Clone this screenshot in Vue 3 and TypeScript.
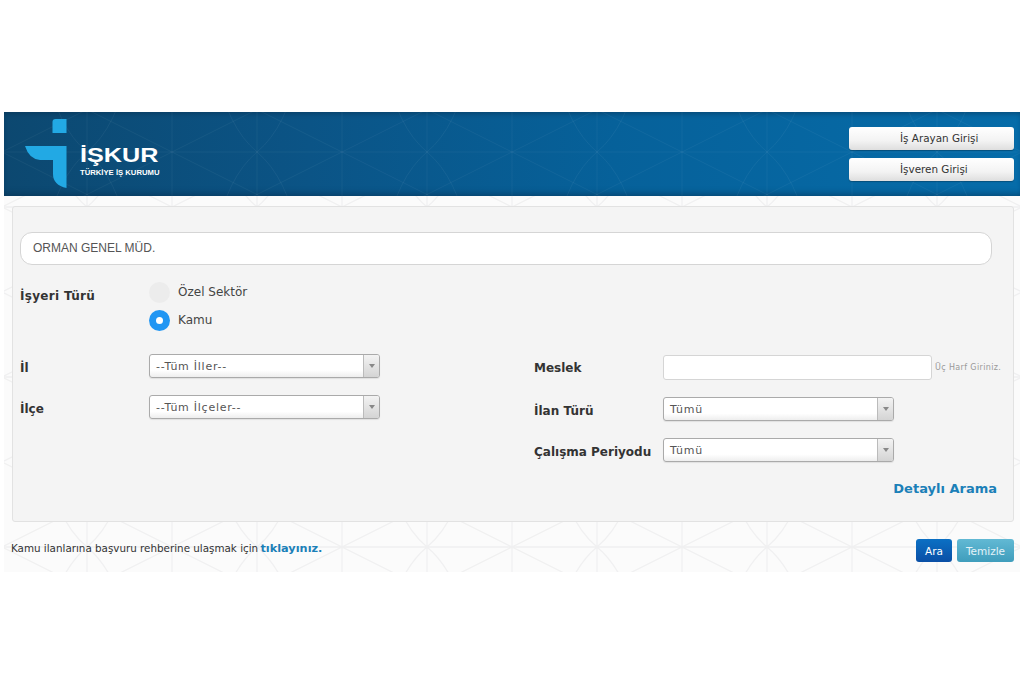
<script setup lang="ts">
function buildPattern(originX: number, originY: number, w: number, h: number): string {
  const parts: string[] = [];
  const step = 85;
  const rowStep = 170;
  for (let j = -3; j < 5; j++) {
    const y = originY + j * rowStep;
    parts.push(`M0 ${y} L${w} ${y}`);
  }
  for (let i = -8; i < 16; i++) {
    const x = originX + i * step;
    parts.push(`M${x} 0 L${x} ${h}`);
    for (let j = -3; j < 5; j++) {
      const y = originY + j * rowStep;
      if (((i % 2) + 2) % 2 === 0) {
        parts.push(`M${x - 170} ${y - 85} L${x + 170} ${y + 85} M${x - 170} ${y + 85} L${x + 170} ${y - 85}`);
      } else {
        parts.push(`M${x - 42} ${y - 85} Q${x - 30} ${y - 25} ${x} ${y} Q${x + 30} ${y + 25} ${x + 42} ${y + 85}`);
        parts.push(`M${x + 42} ${y - 85} Q${x + 30} ${y - 25} ${x} ${y} Q${x - 30} ${y + 25} ${x - 42} ${y + 85}`);
      }
    }
  }
  return parts.join(" ");
}
const headerPattern = buildPattern(508, 40, 1016, 84);
const bgPattern = buildPattern(508, 351, 1016, 376);
</script>

<template>
  <div class="page">
    <header class="top">
      <svg class="top-pattern" width="1016" height="84" viewBox="0 0 1016 84" aria-hidden="true">
        <path :d="headerPattern" fill="none" stroke="#ffffff" stroke-opacity="0.05" stroke-width="1" />
      </svg>
      <div class="brand">
        <svg class="mark" width="46" height="72" viewBox="0 0 46 72" aria-hidden="true">
          <path d="M27.5 3 Q27.5 0 30.5 0 L41.5 0 L41.5 14 L27.5 14 Z" fill="#22a9e4" />
          <path d="M0 27 L41.5 27 L41.5 69 Q28 66 28 55 L28 41 L15 41 Q4 40 0 27 Z" fill="#22a9e4" />
        </svg>
        <div class="brand-text">
          <div class="brand-name">İŞKUR</div>
          <div class="brand-sub">TÜRKİYE İŞ KURUMU</div>
        </div>
      </div>
      <div class="logins">
        <button class="login" type="button">İş Arayan Girişi</button>
        <button class="login" type="button">İşveren Girişi</button>
      </div>
    </header>

    <main class="body">
      <svg class="body-pattern" width="1016" height="376" viewBox="0 0 1016 376" aria-hidden="true">
        <path :d="bgPattern" fill="none" stroke="#f0f0f1" stroke-width="1.3" />
      </svg>
      <section class="panel">
        <div class="search">ORMAN GENEL MÜD.</div>

        <div class="type-row">
          <div class="label type-label">İşyeri Türü</div>
          <div class="radios">
            <div class="radio-row">
              <span class="radio"></span>
              <span class="radio-text">Özel Sektör</span>
            </div>
            <div class="radio-row">
              <span class="radio on"></span>
              <span class="radio-text">Kamu</span>
            </div>
          </div>
        </div>

        <div class="cols">
          <div class="col-left">
            <div class="field">
              <div class="label left-label">İl</div>
              <div class="select"><span class="select-text">--Tüm İller--</span><span class="select-btn"></span></div>
            </div>
            <div class="field">
              <div class="label left-label">İlçe</div>
              <div class="select"><span class="select-text">--Tüm İlçeler--</span><span class="select-btn"></span></div>
            </div>
          </div>
          <div class="col-right">
            <div class="field meslek">
              <div class="label right-label meslek-label">Meslek</div>
              <div class="text-input"></div>
              <span class="hint">Üç Harf Giriniz.</span>
            </div>
            <div class="field">
              <div class="label right-label">İlan Türü</div>
              <div class="select"><span class="select-text">Tümü</span><span class="select-btn"></span></div>
            </div>
            <div class="field">
              <div class="label right-label">Çalışma Periyodu</div>
              <div class="select"><span class="select-text">Tümü</span><span class="select-btn"></span></div>
            </div>
            <a class="detail" href="#">Detaylı Arama</a>
          </div>
        </div>
      </section>

      <footer class="foot">
        <p class="note">Kamu ilanlarına başvuru rehberine ulaşmak için <a href="#">tıklayınız.</a></p>
        <div class="actions">
          <button class="act ara" type="button">Ara</button>
          <button class="act temizle" type="button">Temizle</button>
        </div>
      </footer>
    </main>
  </div>
</template>

<style>
html, body { margin: 0; background: #fff; }
</style>

<style scoped>
* { box-sizing: border-box; }
.page {
  width: 1024px;
  height: 683px;
  padding: 112px 4px 0;
  font-family: "DejaVu Sans", Verdana, sans-serif;
  color: #333;
  overflow: hidden;
}
.top {
  position: relative;
  height: 84px;
  display: flex;
  justify-content: space-between;
  background: linear-gradient(90deg, #0c4870 0%, #0b5486 30%, #06619a 60%, #066ca9 100%);
  box-shadow: inset 0 5px 5px -3px rgba(6, 40, 70, .45), inset 0 -6px 6px -4px rgba(6, 40, 70, .5);
  padding: 7px 6px 0 21px;
}
.top-pattern { position: absolute; left: 0; top: 0; }
.brand { position: relative; display: flex; }
.mark { display: block; }
.brand-text { margin: 25px 0 0 9px; color: #fff; font-family: "Liberation Sans", Arial, sans-serif; font-weight: 700; }
.brand-name {
  font-size: 20px;
  line-height: 22px;
  transform: scaleX(1.26);
  transform-origin: left center;
}
.brand-sub { font-size: 7.7px; line-height: 10px; margin-top: 2px; white-space: nowrap; }
.logins { position: relative; display: flex; flex-direction: column; gap: 8px; padding-top: 8px; }
.login {
  width: 165px;
  height: 23px;
  border: 0;
  border-radius: 3px;
  padding: 0 0 2px 51px;
  text-align: left;
  background: linear-gradient(#ffffff, #f3f3f3 60%, #dedede);
  font: 10.4px "DejaVu Sans", Verdana, sans-serif;
  color: #333;
  box-shadow: 0 1px 1px rgba(0, 0, 0, .25);
}
.body {
  position: relative;
  height: 376px;
  background: #fbfbfb;
  padding: 10px 6px 0 8px;
  overflow: hidden;
}
.body-pattern { position: absolute; left: 0; top: 0; }
.panel {
  position: relative;
  height: 316px;
  background: #f4f4f4;
  border: 1px solid #e2e2e2;
  border-radius: 3px;
  padding: 25px 0 0 7px;
}
.search {
  width: 972px;
  height: 33px;
  border: 1px solid #d5d5d5;
  border-radius: 12px;
  background: #fff;
  padding-left: 12px;
  font: 12px/31px "Liberation Sans", Arial, sans-serif;
  color: #555;
}
.label { flex: none; font-size: 12px; font-weight: 700; color: #333; white-space: nowrap; padding-top: 3px; }
.meslek-label { padding-top: 0; }
.type-row { display: flex; margin-top: 17px; }
.type-label { width: 129px; padding-top: 6px; line-height: 16px; letter-spacing: .3px; }
.radios { display: flex; flex-direction: column; gap: 7px; }
.radio-row { display: flex; height: 21px; gap: 8px; }
.radio { width: 21px; height: 21px; border-radius: 50%; background: #ececec; position: relative; }
.radio.on { background: #2196f3; }
.radio.on::after {
  content: "";
  position: absolute;
  left: 7px;
  top: 7px;
  width: 7px;
  height: 7px;
  border-radius: 50%;
  background: #fff;
}
.radio-text { font-size: 12px; line-height: 14px; color: #444; padding-top: 2.5px; }
.cols { display: flex; margin-top: 24px; }
.col-left { width: 514px; margin-top: -1px; display: flex; flex-direction: column; gap: 17px; }
.col-right { width: 463px; display: flex; flex-direction: column; gap: 17px; position: relative; }
.field { display: flex; align-items: center; height: 24px; }
.left-label { width: 129px; }
.right-label { width: 129px; }
.meslek { height: 25px; }
.select {
  width: 231px;
  height: 24px;
  display: flex;
  border: 1px solid #aaa;
  border-radius: 3px;
  background: linear-gradient(#ffffff 70%, #eeeeee);
  box-shadow: 0 1px 1px rgba(0, 0, 0, .08);
  overflow: hidden;
}
.select-text { flex: 1; padding-left: 6px; font-size: 11px; line-height: 24px; color: #555; letter-spacing: .75px; white-space: nowrap; }
.select-btn {
  position: relative;
  width: 16px;
  border-left: 1px solid #bbb;
  background: linear-gradient(#f3f3f3, #d4d4d4);
}
.select-btn::after {
  content: "";
  position: absolute;
  left: 5px;
  top: 9px;
  border: 3px solid transparent;
  border-top: 4px solid #888;
  border-bottom: 0;
}
.text-input {
  width: 269px;
  height: 25px;
  border: 1px solid #d5d5d5;
  border-radius: 3px;
  background: #fff;
  flex: none;
}
.hint { margin-left: 3px; font-size: 8px; color: #999; white-space: nowrap; letter-spacing: .37px; }
.detail {
  align-self: flex-end;
  margin: 2px 0 0;
  font-size: 13px;
  font-weight: 700;
  line-height: 16px;
  color: #1b80b8;
  text-decoration: none;
}
.foot {
  position: relative;
  display: flex;
  justify-content: space-between;
  margin-left: -1px;
  padding-top: 17px;
}
.note { margin: 2px 0 0; font-size: 10.35px; line-height: 15px; color: #333; }
.note a { color: #1b80b8; font-weight: 700; text-decoration: none; font-size: 11.3px; margin-left: -1px; }
.actions { display: flex; gap: 5px; }
.act {
  height: 23px;
  border: 0;
  border-radius: 3px;
  padding: 0;
  font: 10.5px "DejaVu Sans", Verdana, sans-serif;
  color: #fff;
}
.ara { width: 36px; background: linear-gradient(#0b70c4, #0a4fa6); }
.temizle { width: 57px; background: linear-gradient(#62b9d4, #3f9dbc); color: #e4f3f8; }
</style>
